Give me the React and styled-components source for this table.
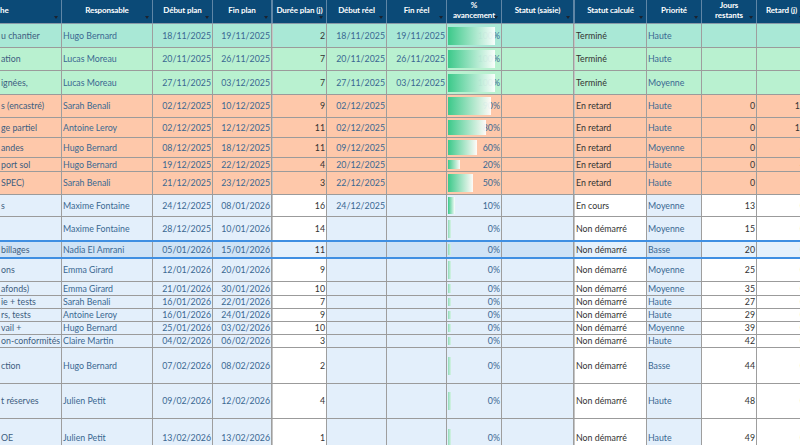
import styled, { createGlobalStyle, css } from "styled-components";

const GlobalStyle = createGlobalStyle`
    html, body {
        margin: 0;
        padding: 0;
        background: #ffffff;
        overflow: hidden;
    }
    body {
        font-family: Lato, "Liberation Sans", sans-serif;
    }
`

const columns = [
    { key: "task", label: ["he"], width: 62, align: "left", color: "#3d5d80" },
    { key: "resp", label: ["Responsable"], width: 91, align: "left", color: "#3a6892" },
    { key: "dp", label: ["Début plan"], width: 60, align: "right", color: "#3a6892" },
    { key: "fp", label: ["Fin plan"], width: 59, align: "right", color: "#3a6892" },
    { key: "dur", label: ["Durée plan (j)"], width: 55, align: "right", color: "#333333", white: true, thick: true },
    { key: "dr", label: ["Début réel"], width: 60, align: "right", color: "#3a6892" },
    { key: "fr", label: ["Fin réel"], width: 60, align: "right", color: "#3a6892" },
    { key: "pct", label: ["%", "avancement"], width: 55, align: "right", color: "#3a6892" },
    { key: "saisie", label: ["Statut (saisie)"], width: 72, align: "left", color: "#333333" },
    { key: "statut", label: ["Statut calculé"], width: 73, align: "left", color: "#333333", white: true, thick: true },
    { key: "prio", label: ["Priorité"], width: 55, align: "left", color: "#3a6892" },
    { key: "jr", label: ["Jours", "restants"], width: 55, align: "right", color: "#333333", white: true },
    { key: "ret", label: ["Retard (j)"], width: 50, align: "right", color: "#333333", white: true },
]

const template = columns.map((c) => c.width + "px").join(" ")

const rows = [
    { tone: "teal", h: 24, task: "u chantier", resp: "Hugo Bernard", dp: "18/11/2025", fp: "19/11/2025", dur: 2, dr: "18/11/2025", fr: "19/11/2025", pct: 100, statut: "Terminé", prio: "Haute", jr: "", ret: "" },
    { tone: "green", h: 23, task: "ation", resp: "Lucas Moreau", dp: "20/11/2025", fp: "26/11/2025", dur: 7, dr: "20/11/2025", fr: "26/11/2025", pct: 100, statut: "Terminé", prio: "Haute", jr: "", ret: "" },
    { tone: "green", h: 24, task: "ignées,", resp: "Lucas Moreau", dp: "27/11/2025", fp: "03/12/2025", dur: 7, dr: "27/11/2025", fr: "03/12/2025", pct: 100, statut: "Terminé", prio: "Moyenne", jr: "", ret: "" },
    { tone: "late", h: 23, task: "s (encastré)", resp: "Sarah Benali", dp: "02/12/2025", fp: "10/12/2025", dur: 9, dr: "02/12/2025", fr: "", pct: 90, statut: "En retard", prio: "Haute", jr: 0, ret: 16 },
    { tone: "late", h: 20, task: "ge partiel", resp: "Antoine Leroy", dp: "02/12/2025", fp: "12/12/2025", dur: 11, dr: "02/12/2025", fr: "", pct: 80, statut: "En retard", prio: "Haute", jr: 0, ret: 14 },
    { tone: "late", h: 20, task: "andes", resp: "Hugo Bernard", dp: "08/12/2025", fp: "18/12/2025", dur: 11, dr: "09/12/2025", fr: "", pct: 60, statut: "En retard", prio: "Moyenne", jr: 0, ret: 8 },
    { tone: "late", h: 14, task: "port sol", resp: "Hugo Bernard", dp: "19/12/2025", fp: "22/12/2025", dur: 4, dr: "20/12/2025", fr: "", pct: 20, statut: "En retard", prio: "Haute", jr: 0, ret: 4 },
    { tone: "late", h: 23, task: "SPEC)", resp: "Sarah Benali", dp: "21/12/2025", fp: "23/12/2025", dur: 3, dr: "22/12/2025", fr: "", pct: 50, statut: "En retard", prio: "Haute", jr: 0, ret: 3 },
    { tone: "todo", h: 22, task: "s", resp: "Maxime Fontaine", dp: "24/12/2025", fp: "08/01/2026", dur: 16, dr: "24/12/2025", fr: "", pct: 10, statut: "En cours", prio: "Moyenne", jr: 13, ret: 0 },
    { tone: "todo", h: 24, task: "", resp: "Maxime Fontaine", dp: "28/12/2025", fp: "10/01/2026", dur: 14, dr: "", fr: "", pct: 0, statut: "Non démarré", prio: "Moyenne", jr: 15, ret: 0 },
    { tone: "todo", h: 19, selected: true, task: "billages", resp: "Nadia El Amrani", dp: "05/01/2026", fp: "15/01/2026", dur: 11, dr: "", fr: "", pct: 0, statut: "Non démarré", prio: "Basse", jr: 20, ret: 0 },
    { tone: "todo", h: 23, task: "ons", resp: "Emma Girard", dp: "12/01/2026", fp: "20/01/2026", dur: 9, dr: "", fr: "", pct: 0, statut: "Non démarré", prio: "Moyenne", jr: 25, ret: 0 },
    { tone: "todo", h: 14, task: "afonds)", resp: "Emma Girard", dp: "21/01/2026", fp: "30/01/2026", dur: 10, dr: "", fr: "", pct: 0, statut: "Non démarré", prio: "Moyenne", jr: 35, ret: 0 },
    { tone: "todo", h: 13, task: "ie + tests", resp: "Sarah Benali", dp: "16/01/2026", fp: "22/01/2026", dur: 7, dr: "", fr: "", pct: 0, statut: "Non démarré", prio: "Haute", jr: 27, ret: 0 },
    { tone: "todo", h: 13, task: "rs, tests", resp: "Antoine Leroy", dp: "16/01/2026", fp: "24/01/2026", dur: 9, dr: "", fr: "", pct: 0, statut: "Non démarré", prio: "Haute", jr: 29, ret: 0 },
    { tone: "todo", h: 13, task: "vail +", resp: "Hugo Bernard", dp: "25/01/2026", fp: "03/02/2026", dur: 10, dr: "", fr: "", pct: 0, statut: "Non démarré", prio: "Moyenne", jr: 39, ret: 0 },
    { tone: "todo", h: 13, task: "on-conformités", resp: "Claire Martin", dp: "04/02/2026", fp: "06/02/2026", dur: 3, dr: "", fr: "", pct: 0, statut: "Non démarré", prio: "Haute", jr: 42, ret: 0 },
    { tone: "todo", h: 36, task: "ction", resp: "Hugo Bernard", dp: "07/02/2026", fp: "08/02/2026", dur: 2, dr: "", fr: "", pct: 0, statut: "Non démarré", prio: "Basse", jr: 44, ret: 0 },
    { tone: "todo", h: 35, task: "t réserves", resp: "Julien Petit", dp: "09/02/2026", fp: "12/02/2026", dur: 4, dr: "", fr: "", pct: 0, statut: "Non démarré", prio: "Haute", jr: 48, ret: 0 },
    { tone: "todo", h: 38, task: "OE", resp: "Julien Petit", dp: "13/02/2026", fp: "13/02/2026", dur: 1, dr: "", fr: "", pct: 0, statut: "Non démarré", prio: "Haute", jr: 49, ret: 0 },
]

const tones = {
    teal: { base: "#a9e8d6", white: "#a9e8d6" },
    green: { base: "#b9f1d0", white: "#b9f1d0" },
    late: { base: "#fec8aa", white: "#fec8aa" },
    todo: { base: "#e3effb", white: "#ffffff" },
    selected: { base: "#cfe3f6", white: "#e5f1fc" },
}

function cellBg(row, col) {
    const t = row.selected ? tones.selected : tones[row.tone]
    return col.white ? t.white : t.base
}

export default function App() {
    return (
        <>
            <GlobalStyle />
            <Sheet>
                <HeaderRow>
                    {columns.map((c) => (
                        <HeadCell key={c.key} $thick={c.thick}>
                            <HeadLabel>
                                {c.label.map((l, i) => (
                                    <span key={i}>{l}</span>
                                ))}
                            </HeadLabel>
                            <FilterArrow />
                        </HeadCell>
                    ))}
                </HeaderRow>
                {rows.map((r, i) => (
                    <Row key={i} $h={r.h} $selected={r.selected}>
                        {columns.map((c) => (
                            <Cell
                                key={c.key}
                                $bg={cellBg(r, c)}
                                $align={c.align}
                                $color={c.color}
                                $thick={c.thick}
                            >
                                {c.key === "pct" ? (
                                    <>
                                        <span>{r.pct}%</span>
                                        <DataBar $empty={r.pct === 0} style={{ width: 3 + Math.round(r.pct * 0.44) }} />
                                    </>
                                ) : c.key === "saisie" ? null : (
                                    <span>{r[c.key]}</span>
                                )}
                            </Cell>
                        ))}
                    </Row>
                ))}
            </Sheet>
        </>
    )
}

const Sheet = styled.div`
    width: 800px;
    height: 445px;
    overflow: hidden;
    font-size: 8.8px;
    background: #ffffff;
`
const HeaderRow = styled.div`
    display: grid;
    grid-template-columns: ${template};
    height: 24px;
    background-color: #0b4a77;
    border-bottom: 1px solid #8a9aa8;
    box-sizing: border-box;
`
const HeadCell = styled.div`
    position: relative;
    display: flex;
    align-items: center;
    justify-content: center;
    color: #ffffff;
    font-weight: 700;
    font-size: 8px;
    line-height: 9.5px;
    padding: 0 0 2px 0;
    border-right: 1px solid #5f86a6;
    ${(p) => p.$thick && css`border-left: 1px solid #5f86a6;`}
    overflow: hidden;
    white-space: nowrap;
    &:first-child{
        justify-content: flex-start;
    }
`
const HeadLabel = styled.div`
    display: flex;
    flex-direction: column;
    align-items: center;
    text-align: center;
    letter-spacing: -0.1px;
`
const FilterArrow = styled.i`
    position: absolute;
    right: 3px;
    bottom: 4px;
    width: 0;
    height: 0;
    border-left: 2.5px solid transparent;
    border-right: 2.5px solid transparent;
    border-top: 3px solid #1b2330;
`
const Row = styled.div`
    display: grid;
    grid-template-columns: ${template};
    height: ${(p) => p.$h}px;
    box-sizing: border-box;
    border-bottom: 1px solid #9b9b9b;
    ${(p) => p.$selected && css`
        border-top: 2px solid #3f8fe2;
        border-bottom: 2px solid #3f8fe2;
        margin-top: -1px;
    `}
`
const Cell = styled.div`
    position: relative;
    display: flex;
    align-items: center;
    justify-content: ${(p) => (p.$align === "right" ? "flex-end" : "flex-start")};
    padding: 0 1px;
    background-color: ${(p) => p.$bg};
    color: ${(p) => p.$color};
    border-right: 1px solid #9e9e9e;
    ${(p) => p.$thick && css`border-left: 1px solid #c4c4c4;`}
    white-space: nowrap;
    overflow: hidden;
    line-height: 10px;
    span{
        position: relative;
    }
`
const DataBar = styled.div`
    position: absolute;
    left: 1px;
    top: 2px;
    bottom: 2px;
    max-height: 18px;
    margin: auto 0;
    background: ${(p) => (p.$empty
        ? "linear-gradient(to right, #8fdcb9, #d7f3e6)"
        : "linear-gradient(to right, #3cc98a, rgba(255,255,255,0.92))")};
    z-index: 1;
`
